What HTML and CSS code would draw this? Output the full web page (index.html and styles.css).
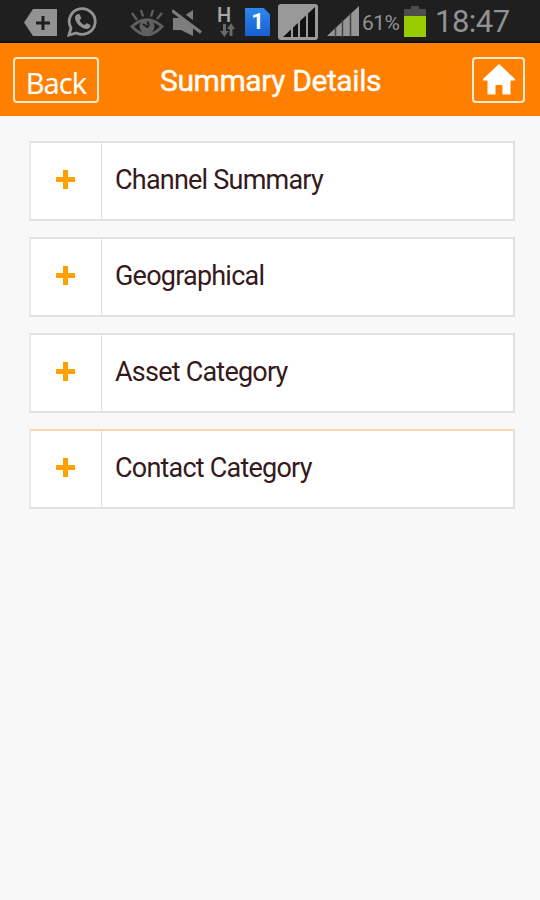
FILE: index.html
```html
<!DOCTYPE html>
<html>
<head>
  <meta charset="utf-8">
  <title>Summary Details</title>
  <link rel="stylesheet" href="styles.css">
</head>
<body>
  <div class="status-bar">
    <svg class="icon-tag" width="33" height="27" viewBox="0 0 33 27">
      <path fill="#929292" d="M9 0H33V27H9L0 13.5Z"/>
      <path stroke="#1f1f1f" stroke-width="3" d="M12 14H26M19 7V21"/>
    </svg>
    <svg class="icon-whatsapp" width="31" height="30" viewBox="0 0 31 30">
      <path fill="none" stroke="#929292" stroke-width="2.8" d="M2 28L4 21A13 12.8 0 1 1 9.500 26Z"/>
      <path fill="#929292" d="M10 7.500C11 6.500 12.500 7 13 8L14.200 11C14.300 12 12.700 13 12.700 13.500C13.500 15.500 15.500 17.300 17.500 18C18.500 18 19 16.200 20 16.300L23.300 18C24 18.500 23.300 20.600 22 21.300C18 24 8 17.500 8 10.500C8 9 9 8 10 7.500Z"/>
    </svg>
    <svg class="icon-eye" width="34" height="28" viewBox="0 0 34 28">
      <path fill="none" stroke="#606060" stroke-width="2.300" d="M2 4L7 11M11 1L13 7.500M23 1L21 7.500M32 4L27 10"/>
      <path fill="none" stroke="#606060" stroke-width="3" d="M2 17.500Q17 4 32 17.500Q17 34 2 17.500Z"/>
      <circle cx="17" cy="17.500" r="7.500" fill="#606060"/>
      <path fill="none" stroke="#1f1f1f" stroke-width="2" d="M13 15L17.500 18A3 3 0 0 0 17 13"/>
    </svg>
    <svg class="icon-mute" width="31" height="28" viewBox="0 0 31 28">
      <path fill="#7d7d7d" d="M1 9H9L21 1V27L9 21H1Z"/>
      <path stroke="#1f1f1f" stroke-width="5" d="M1 -1L31 22"/>
      <path stroke="#7d7d7d" stroke-width="3" d="M0 1.500L29 23.500"/>
    </svg>
    <div class="network">
      <span class="network-type">H</span>
      <svg class="network-arrows" width="15" height="14" viewBox="0 0 15 14">
        <path fill="#696969" d="M3 1H6V8H8.500L4.500 14L0 8H3ZM9.500 13V6H7L11 0L15 6H12.500V13Z"/>
      </svg>
    </div>
    <div class="sim">1</div>
    <svg class="icon-signal-box" width="40" height="36" viewBox="0 0 40 36">
      <rect width="40" height="36" rx="3" fill="#999"/>
      <path fill="#111" d="M5 33L37 3V33Z"/>
      <path stroke="#999" stroke-width="2" d="M14 22V34M21 16V34M29 10V34"/>
    </svg>
    <svg class="icon-signal" width="32" height="32" viewBox="0 0 32 32">
      <path fill="#969696" d="M0 31L32 1V31Z"/>
      <path stroke="#444" stroke-width="1.500" d="M8.500 22V32M15.500 15V32M23.500 8V32"/>
    </svg>
    <span class="battery-level">61%</span>
    <svg class="icon-battery" width="22" height="31" viewBox="0 0 22 31">
      <path fill="#4d4d4d" d="M7 0H15V3H22V10H0V3H7Z"/>
      <rect y="10" width="22" height="21" fill="#99cc00"/>
    </svg>
    <span class="clock">18:47</span>
  </div>

  <div class="header">
    <a class="header-button back-button">Back</a>
    <h1>Summary Details</h1>
    <a class="header-button home-button">
      <svg width="32" height="31" viewBox="0 0 32 31">
        <path fill="#fff" d="M16 0L32 15V16.500H27.500V30.500H19.500V21H12.500V30.500H4.500V16.500H0V15Z"/>
      </svg>
    </a>
  </div>

  <div class="list">
    <div class="item">
      <div class="item-toggle"></div>
      <span class="item-label">Channel Summary</span>
    </div>
    <div class="item">
      <div class="item-toggle"></div>
      <span class="item-label">Geographical</span>
    </div>
    <div class="item">
      <div class="item-toggle"></div>
      <span class="item-label">Asset Category</span>
    </div>
    <div class="item active">
      <div class="item-toggle"></div>
      <span class="item-label">Contact Category</span>
    </div>
  </div>
</body>
</html>
```
FILE: styles.css
```css
body {
  margin: 0;
  min-height: 900px;
  font-family: Roboto, sans-serif;
  background-color: #f8f8f8;
}
.status-bar {
  display: flex;
  align-items: flex-start;
  height: 43px;
  box-sizing: border-box;
  padding-left: 24px;
  background-color: #1f1f1f;
  border-bottom: 2px solid #111;
  color: #929292;
}
.status-bar svg {
  flex: none;
}
.icon-tag {
  margin-top: 9px;
}
.icon-whatsapp {
  margin: 7px 0 0 10px;
}
.icon-eye {
  margin: 9px 0 0 32px;
}
.icon-mute {
  margin: 9px 0 0 8px;
}
.network {
  display: flex;
  flex-direction: column;
  width: 19px;
  margin: 7px 0 0 14px;
}
.network-type {
  height: 16px;
  font-size: 20px;
  font-weight: 500;
  line-height: 17px;
  letter-spacing: -1px;
  color: #aaa;
}
.network-arrows {
  margin-left: 3px;
}
.sim {
  width: 25px;
  height: 28px;
  margin: 8px 0 0 9px;
  background: linear-gradient(#2f86ee, #1560d2);
  clip-path: polygon(0 0, 75% 0, 100% 22%, 100% 100%, 0 100%);
  color: #fff;
  font-size: 22px;
  font-weight: bold;
  line-height: 28px;
  text-align: center;
}
.icon-signal-box {
  margin: 4px 0 0 8px;
}
.icon-signal {
  margin: 5px 0 0 9px;
}
.battery-level {
  width: 42px;
  margin-left: 3px;
  font-size: 21px;
  line-height: 46px;
  letter-spacing: -0.5px;
}
.icon-battery {
  margin-top: 6px;
}
.clock {
  margin-left: 9px;
  font-size: 31px;
  line-height: 43px;
  letter-spacing: -0.5px;
}
.header {
  display: flex;
  align-items: center;
  justify-content: space-between;
  height: 73px;
  padding: 0 15px 0 13px;
  background-color: #ff8000;
  color: #fff;
}
.header-button {
  display: flex;
  align-items: center;
  justify-content: center;
  box-sizing: border-box;
  height: 46px;
  border: 2px solid #ffe9d2;
  border-radius: 4px;
}
.back-button {
  width: 86px;
  padding-top: 6px;
  font-family: "Noto Sans", sans-serif;
  font-size: 29px;
  letter-spacing: -1px;
}
.home-button {
  width: 53px;
}
h1 {
  flex: 1;
  margin: 3px 0 0 61px;
  font-size: 30px;
  font-weight: 400;
  line-height: 70px;
  letter-spacing: -0.4px;
  white-space: nowrap;
  -webkit-text-stroke: 0.4px #fff;
}
.list {
  display: flex;
  flex-direction: column;
  gap: 16px;
  padding: 25px 25px 0 29px;
}
.item {
  display: flex;
  align-items: center;
  height: 80px;
  box-sizing: border-box;
  border: 2px solid #e2e2e2;
  border-left-color: #e9e9e9;
  background-color: #fff;
}
.item.active {
  border-top-color: #f8d3b3;
}
.item-toggle {
  display: flex;
  align-items: center;
  justify-content: center;
  align-self: stretch;
  width: 71px;
  box-sizing: border-box;
  border-right: 1px solid #dedede;
  padding: 0 1px 4px 0;
}
/* plus sign from two bars */
.item-toggle:before {
  content: '';
  width: 19px;
  height: 19px;
  background:
    linear-gradient(#ffa000, #ffa000) center / 19px 5px no-repeat,
    linear-gradient(#ffa000, #ffa000) center / 5px 19px no-repeat;
}
.item-label {
  margin-left: 13px;
  padding-bottom: 3px;
  font-size: 27px;
  letter-spacing: -0.78px;
  color: #351a1c;
  white-space: nowrap;
}
```
